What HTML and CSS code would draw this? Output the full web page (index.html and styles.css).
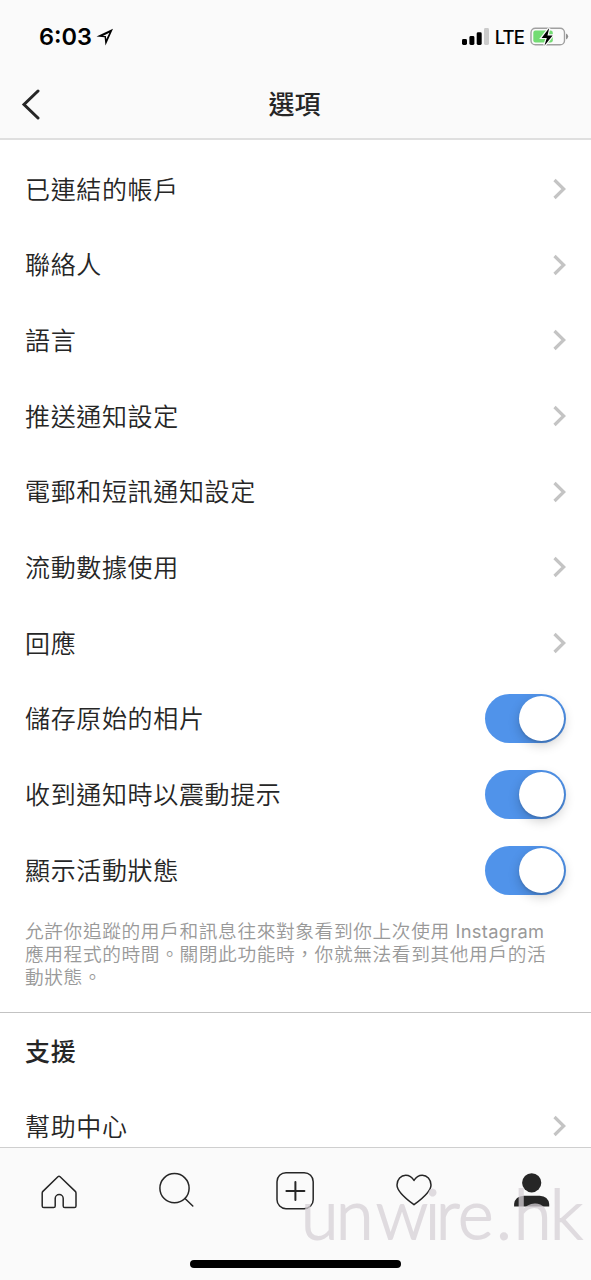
FILE: index.html
```html
<!DOCTYPE html>
<html lang="zh-Hant-HK">
<head>
<meta charset="utf-8">
<title>選項</title>
<link rel="stylesheet" href="styles.css">
</head>
<body>
<div class="screen">
  <header class="header">
    <div class="status">
      <div class="status-left">
        <span class="clock">6:03</span>
        <svg class="location" width="18" height="18" viewBox="0 0 18 18"><path fill-rule="evenodd" d="M.5 8.6 17 .8 9.5 17.4 8.6 9.2ZM6.8 7.9 9.9 8 10.2 11.2 13.4 4.7Z"/></svg>
      </div>
      <div class="status-right">
        <svg width="28" height="18" viewBox="0 0 28 18"><rect x="1" y="11" width="5" height="6" rx="1.4"/><rect x="8.4" y="8" width="5" height="9" rx="1.4"/><rect x="15.7" y="4.3" width="5" height="12.7" rx="1.4"/><rect x="23" y="0" width="5" height="17" rx="1.4" fill="#cbcbcb"/></svg>
        <span class="network">LTE</span>
        <svg class="battery" width="40" height="20" viewBox="0 0 40 20"><rect x="1" y="1.3" width="33.5" height="16.5" rx="4.4" fill="none" stroke="#a0a0a0" stroke-width="1.4"/><path d="M36 6.5q2.2 1 2.2 3T36 12.5Z" fill="#909090"/><rect x="3.3" y="3.5" width="19.5" height="12" rx="2.2" fill="#73dc73"/><path d="M19.2 .9 11.6 10.9h5.2L14.4 18.7 22.6 8.5h-5.1Z" fill="#000" stroke="#fafafa" stroke-width="2.4" paint-order="stroke"/></svg>
      </div>
    </div>
    <div class="navbar">
      <svg class="back" width="20" height="32" viewBox="0 0 20 32"><path d="M17 2 3 15.5 17 29"/></svg>
      <h1 class="title">選項</h1>
    </div>
  </header>

  <main class="content">
    <div class="row"><span class="label">已連結的帳戶</span><svg class="chevron" width="14" height="22" viewBox="0 0 14 22"><path d="M2.5 2 11.7 11 2.5 20"/></svg></div>
    <div class="row"><span class="label">聯絡人</span><svg class="chevron" width="14" height="22" viewBox="0 0 14 22"><path d="M2.5 2 11.7 11 2.5 20"/></svg></div>
    <div class="row"><span class="label">語言</span><svg class="chevron" width="14" height="22" viewBox="0 0 14 22"><path d="M2.5 2 11.7 11 2.5 20"/></svg></div>
    <div class="row"><span class="label">推送通知設定</span><svg class="chevron" width="14" height="22" viewBox="0 0 14 22"><path d="M2.5 2 11.7 11 2.5 20"/></svg></div>
    <div class="row"><span class="label">電郵和短訊通知設定</span><svg class="chevron" width="14" height="22" viewBox="0 0 14 22"><path d="M2.5 2 11.7 11 2.5 20"/></svg></div>
    <div class="row"><span class="label">流動數據使用</span><svg class="chevron" width="14" height="22" viewBox="0 0 14 22"><path d="M2.5 2 11.7 11 2.5 20"/></svg></div>
    <div class="row"><span class="label">回應</span><svg class="chevron" width="14" height="22" viewBox="0 0 14 22"><path d="M2.5 2 11.7 11 2.5 20"/></svg></div>
    <div class="row"><span class="label">儲存原始的相片</span><span class="switch"><span class="knob"></span></span></div>
    <div class="row"><span class="label">收到通知時以震動提示</span><span class="switch"><span class="knob"></span></span></div>
    <div class="row"><span class="label">顯示活動狀態</span><span class="switch"><span class="knob"></span></span></div>
    <p class="note">允許你追蹤的用戶和訊息往來對象看到你上次使用 <span class="latin">Instagram</span><br>應用程式的時間。關閉此功能時，你就無法看到其他用戶的活<br>動狀態。</p>
    <section class="support">
      <div class="row heading"><span class="label">支援</span></div>
      <div class="row"><span class="label">幫助中心</span><svg class="chevron" width="14" height="22" viewBox="0 0 14 22"><path d="M2.5 2 11.7 11 2.5 20"/></svg></div>
    </section>
  </main>

  <footer class="footer">
    <nav class="tabs">
      <svg width="40" height="40" viewBox="0 0 40 40"><path d="M18.9 5.8q1.1-1 2.2 0L36.3 20.4q.7.7.7 1.8V35q0 1.6-1.6 1.6H25.8q-1.6 0-1.6-1.6v-7.4a4 4 0 0 0-8 0V35q0 1.6-1.6 1.6H4.8q-1.6 0-1.6-1.6V22.2q0-1.1.7-1.8Z"/></svg>
      <svg width="40" height="40" viewBox="0 0 40 40"><circle cx="17.5" cy="17.2" r="14.6"/><path d="M28 27.5 35.8 35"/></svg>
      <svg width="40" height="40" viewBox="0 0 40 40"><rect x="2" y="1.7" width="36.2" height="36" rx="9"/><path class="plus" d="M20.4 11v18M11.4 20h18"/></svg>
      <svg width="40" height="40" viewBox="0 0 40 40"><path d="M20 33.7C16 30.7 3 21.7 3 14 3 8.3 7 4.2 11.7 4.2 15.8 4.2 18.2 6.3 20 9.5 21.8 6.3 24.2 4.2 28.3 4.2 33 4.2 37 8.3 37 14 37 21.7 24 30.7 20 33.7Z"/></svg>
      <svg class="active" width="40" height="40" viewBox="0 0 40 40"><circle cx="19.7" cy="11.8" r="9.6"/><path d="M2.1 35.5V33Q3.2 25 11.7 24.7H27.7Q36.2 25 37.2 33V35.5Z"/></svg>
    </nav>
    <div class="home-bar"></div>
    <svg class="watermark" width="290" height="100" viewBox="0 0 290 100"><text x="-1 34 74 123 134 156 194 212 248" y="73">unwire.hk</text></svg>
  </footer>
</div>
</body>
</html>
```
FILE: styles.css
```css
* { box-sizing: border-box; }
body {
  margin: 0;
  background: #fff;
  color: #262626;
  font-family: Inter, "Noto Sans CJK TC", sans-serif;
}
.screen {
  width: 591px;
  height: 1280px;
  display: flex;
  flex-direction: column;
  overflow: hidden;
}
.header {
  flex: none;
  height: 140px;
  background: #fafafa;
  border-bottom: 2px solid #dfdfdf;
}
.status {
  height: 74px;
  padding: 0 21px 0 39px;
  display: flex;
  justify-content: space-between;
  align-items: center;
  color: #000;
}
.status-left, .status-right { display: flex; align-items: center; }
.status-left { gap: 4px; }
.clock {
  font-size: 23.5px;
  font-weight: 600;
  line-height: 30px;
}
.network {
  font-size: 18.5px;
  font-weight: 500;
  line-height: 24px;
  margin: 0 6px 1px 6px;
  letter-spacing: -.9px;
}
.navbar {
  height: 61px;
  padding: 0 21px;
  display: grid;
  grid-template-columns: 40px 1fr 40px;
  align-items: center;
}
.back { fill: none; stroke: #262626; stroke-width: 3; stroke-linecap: round; }
.title {
  margin: 0;
  padding: 0 2px 3px 0;
  font-family: "Noto Sans CJK TC", sans-serif;
  font-size: 26px;
  font-weight: 500;
  line-height: 38px;
  text-align: center;
}
.content {
  flex: 1;
  min-height: 0;
  padding-top: 11px;
  overflow: hidden;
}
.row {
  height: 75.7px;
  padding: 0 25px;
  display: flex;
  align-items: center;
  justify-content: space-between;
  font-family: "Noto Sans CJK TC", sans-serif;
  font-size: 25px;
  font-weight: 350;
  line-height: 36px;
  letter-spacing: .65px;
}
.label { padding-bottom: 2.4px; }
.heading { font-weight: 500; }
.chevron { fill: none; stroke: #c4c4c4; stroke-width: 3.2; }
.switch {
  width: 81px;
  height: 49px;
  padding: 2px;
  display: flex;
  justify-content: flex-end;
  border-radius: 25px;
  background: #5093ea;
}
.knob {
  width: 45px;
  height: 45px;
  border-radius: 50%;
  background: #fff;
  box-shadow: 0 4px 12px rgba(0, 0, 0, .2), 0 2px 2px rgba(0, 0, 0, .1);
}
.note {
  margin: 0;
  height: 104px;
  padding: 10.8px 0 0 25px;
  color: #999;
  font-family: "Noto Sans CJK TC", sans-serif;
  font-weight: 350;
  font-size: 18.7px;
  line-height: 22.5px;
  letter-spacing: .62px;
  white-space: nowrap;
}
.latin {
  margin-left: 1px;
  font-family: Inter, sans-serif;
  font-size: 18.3px;
  font-weight: 400;
  letter-spacing: .3px;
}
.support { border-top: 1px solid #c3c3c3; }
.footer {
  position: relative;
  flex: none;
  height: 133px;
  background: #fafafa;
  border-top: 1px solid #cfcfcf;
}
.tabs {
  height: 85px;
  display: grid;
  grid-template-columns: repeat(5, 1fr);
  align-items: center;
  justify-items: center;
}
.tabs svg { fill: none; stroke: #262626; stroke-width: 1.5; stroke-linecap: round; stroke-linejoin: round; }
.tabs .plus { stroke-width: 2; }
.tabs .active { fill: #262626; stroke: none; }
.home-bar {
  width: 211px;
  height: 8px;
  margin: 27px auto 0;
  border-radius: 4px;
  background: #000;
}
.watermark {
  position: absolute;
  left: 302px;
  top: 18px;
  fill: #d7d1d7;
  stroke: #d7d1d7;
  stroke-width: 1.8;
  opacity: .75;
  font-family: Lato, sans-serif;
  font-size: 68px;
  font-weight: 300;
}
```
